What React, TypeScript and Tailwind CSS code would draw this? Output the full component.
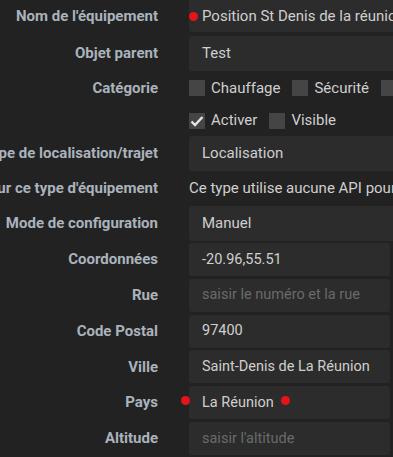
const label = "w-[158px] shrink-0 text-right text-[15px] font-bold text-[#aab3bc] whitespace-nowrap";
const wideInput = "ml-[31px] w-[240px] shrink-0 rounded-[3px] bg-[#2c2c2c] flex items-center pl-[13px] text-[15px] text-[#cfcfcf] whitespace-nowrap overflow-hidden";
const smallInput = "ml-[31px] w-[201px] shrink-0 rounded-[3px] bg-[#2c2c2c] flex items-center pl-[13px] text-[14.5px] whitespace-nowrap";

const Dot = ({ className }: { className: string }) => (
  <span className={`absolute w-[9px] h-[9px] rounded-full bg-[#e8121a] ${className}`} />
);

const Box = ({ checked }: { checked?: boolean }) => (
  <span className="w-4 h-4 shrink-0 bg-[#454545] flex items-center justify-center">
    {checked && (
      <svg width="16" height="16" viewBox="0 0 16 16">
        <path d="M2.5 8.5 L6 12 L13.5 4" fill="none" stroke="#e6e6e6" strokeWidth="2.4" />
      </svg>
    )}
  </span>
);

const Check = ({ text, checked }: { text: string; checked?: boolean }) => (
  <div className="flex items-center gap-[6px] mr-[12px]">
    <Box checked={checked} />
    <span className="text-[15px] text-[#cfcfcf]">{text}</span>
  </div>
);

export default function App() {
  const lower: [string, string, boolean, boolean?][] = [
    ["Coordonnées", "-20.96,55.51", false],
    ["Rue", "saisir le numéro et la rue", true],
    ["Code Postal", "97400", false],
    ["Ville", "Saint-Denis de La Réunion", false],
    ["Pays", "La Réunion", false, true],
    ["Altitude", "saisir l'altitude", true],
  ];

  return (
    <div className="w-[393px] h-[457px] overflow-hidden bg-[#222222]" style={{ fontFamily: "Roboto, sans-serif" }}>
      <div className="-mt-[3px] flex flex-col">
        <div className="flex items-center h-[35px]">
          <div className={`${label} mt-[3px]`}>Nom de l'équipement</div>
          <div className={`${wideInput} h-[35px] relative`}>
            <Dot className="left-[0px] top-[15px]" />
            <span className="pt-[3px]">Position St Denis de la réunion</span>
          </div>
        </div>
        <div className="flex items-center h-[35px] mt-[4px]">
          <div className={label}>Objet parent</div>
          <div className={`${wideInput} h-[35px]`}>Test</div>
        </div>
        <div className="flex items-center h-[34px]">
          <div className={label}>Catégorie</div>
          <div className="ml-[31px] flex items-center whitespace-nowrap">
            <Check text="Chauffage" />
            <Check text="Sécurité" />
            <Check text="Energie" />
          </div>
        </div>
        <div className="flex items-center h-[31px]">
          <div className={label}></div>
          <div className="ml-[31px] flex items-center whitespace-nowrap">
            <Check text="Activer" checked />
            <Check text="Visible" />
          </div>
        </div>
        <div className="flex items-center h-[35px]">
          <div className={`${label} flex justify-end overflow-hidden`}>
            <span>Type de localisation/trajet</span>
          </div>
          <div className={`${wideInput} h-[35px]`}>Localisation</div>
        </div>
        <div className="flex items-center h-[35px]">
          <div className={`${label} flex justify-end overflow-hidden`}>
            <span>Coordonnées pour ce type d'équipement</span>
          </div>
          <div className="ml-[31px] text-[15px] text-[#cfcfcf] whitespace-nowrap">
            Ce type utilise aucune API pour les coordonnées
          </div>
        </div>
        <div className="flex items-center h-[35px]">
          <div className={label}>Mode de configuration</div>
          <div className={`${wideInput} h-[35px]`}>Manuel</div>
        </div>
        <div className="flex flex-col gap-[2.8px] mt-[2px]">
          {lower.map(([name, value, placeholder, dots]) => (
            <div key={name} className="flex items-center h-[33px]">
              <div className={label}>{name}</div>
              <div className={`${smallInput} h-[33px] relative ${placeholder ? "text-[#6a6a6a]" : "text-[#cfcfcf]"}`}>
                {dots && <Dot className="-left-[8px] top-[10px]" />}
                <span className="relative">
                  {value}
                  {dots && <Dot className="-right-[16px] top-[4px]" />}
                </span>
              </div>
            </div>
          ))}
        </div>
      </div>
    </div>
  );
}
